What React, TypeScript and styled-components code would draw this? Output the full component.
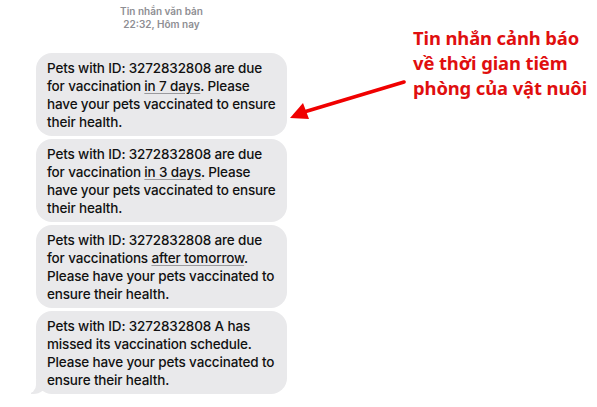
import React from 'react';
import styled, { createGlobalStyle } from 'styled-components';

const GlobalStyle = createGlobalStyle`
  html, body {
    margin: 0;
    padding: 0;
    background: #ffffff;
  }
  body {
    font-family: Inter, 'Liberation Sans', Arial, sans-serif;
  }
`;

const Page = styled.div`
  position: relative;
  width: 597px;
  height: 407px;
  display: flex;
  align-items: flex-start;
  overflow: hidden;
`;

const Thread = styled.div`
  width: 251px;
  margin-left: 36px;
  padding-top: 5px;
  display: flex;
  flex-direction: column;
  gap: 3px;
`;

const Stamp = styled.div`
  text-align: center;
  font-size: 10px;
  font-weight: 600;
  line-height: 13px;
  color: #8e8e93;
  margin-bottom: 19px;
`;

const Bubble = styled.div<{ $tail?: boolean }>`
  position: relative;
  background: #e9e9eb;
  border-radius: 16px;
  padding: 6px 8px 5px 11px;
  font-size: 13.5px;
  font-weight: 500;
  letter-spacing: -0.15px;
  line-height: 18px;
  color: #111;
  white-space: nowrap;
  ${(p) =>
    p.$tail &&
    `
    &::before {
      content: '';
      position: absolute;
      left: -5px;
      bottom: 0;
      width: 16px;
      height: 14px;
      background: #e9e9eb;
      border-bottom-right-radius: 14px 12px;
    }
    &::after {
      content: '';
      position: absolute;
      left: -9px;
      bottom: 0;
      width: 9px;
      height: 15px;
      background: #ffffff;
      border-bottom-right-radius: 9px;
    }
  `}
`;

const Detected = styled.span`
  text-decoration: underline;
  text-decoration-color: #9a9a9e;
  text-decoration-thickness: 1px;
  text-underline-offset: 2px;
`;

const Note = styled.div`
  margin-left: 126px;
  margin-top: 25px;
  font-family: 'Noto Sans', 'Open Sans', sans-serif;
  font-weight: 700;
  font-size: 18.4px;
  line-height: 25px;
  color: #e00f0f;
  letter-spacing: -0.1px;
  white-space: nowrap;
`;

const Arrow = styled.svg`
  position: absolute;
  left: 284px;
  top: 74px;
  pointer-events: none;
`;

const App = () => {
  return (
    <>
      <GlobalStyle />
      <Page>
        <Thread>
          <Stamp>
            Tin nhắn văn bản
            <br />
            22:32, Hôm nay
          </Stamp>
          <Bubble>
            Pets with ID: 3272832808 are due
            <br />
            for vaccination <Detected>in 7 days</Detected>. Please
            <br />
            have your pets vaccinated to ensure
            <br />
            their health.
          </Bubble>
          <Bubble>
            Pets with ID: 3272832808 are due
            <br />
            for vaccination <Detected>in 3 days</Detected>. Please
            <br />
            have your pets vaccinated to ensure
            <br />
            their health.
          </Bubble>
          <Bubble>
            Pets with ID: 3272832808 are due
            <br />
            for vaccinations <Detected>after tomorrow</Detected>.
            <br />
            Please have your pets vaccinated to
            <br />
            ensure their health.
          </Bubble>
          <Bubble $tail>
            Pets with ID: 3272832808 A has
            <br />
            missed its vaccination schedule.
            <br />
            Please have your pets vaccinated to
            <br />
            ensure their health.
          </Bubble>
        </Thread>
        <Note>
          Tin nhắn cảnh báo
          <br />
          về thời gian tiêm
          <br />
          phòng của vật nuôi
        </Note>
        <Arrow width="130" height="52" viewBox="0 0 130 52">
          <line x1="120" y1="8" x2="20" y2="38" stroke="#f00000" strokeWidth="3.6" strokeLinecap="round" />
          <polygon points="6,44 19,29 25,45" fill="#f00000" />
        </Arrow>
      </Page>
    </>
  );
};

export default App;
